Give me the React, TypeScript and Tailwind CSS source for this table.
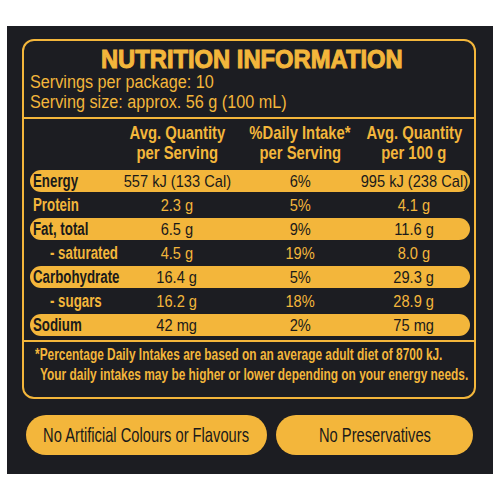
import React from "react";

const rows = [
  { label: "Energy", a: "557 kJ (133 Cal)", b: "6%", c: "995 kJ (238 Cal)", pill: true, sub: false },
  { label: "Protein", a: "2.3 g", b: "5%", c: "4.1 g", pill: false, sub: false },
  { label: "Fat, total", a: "6.5 g", b: "9%", c: "11.6 g", pill: true, sub: false },
  { label: "- saturated", a: "4.5 g", b: "19%", c: "8.0 g", pill: false, sub: true },
  { label: "Carbohydrate", a: "16.4 g", b: "5%", c: "29.3 g", pill: true, sub: false },
  { label: "- sugars", a: "16.2 g", b: "18%", c: "28.9 g", pill: false, sub: true },
  { label: "Sodium", a: "42 mg", b: "2%", c: "75 mg", pill: true, sub: false },
];

function Cell({ children }: { children: React.ReactNode }) {
  return (
    <div className="flex justify-center whitespace-nowrap">
      <span className="inline-block scale-x-[0.86] text-[17px] leading-[22px]">{children}</span>
    </div>
  );
}

export default function App() {
  return (
    <div className="w-[500px] h-[500px] bg-white pt-[26px] px-[7px] font-['Liberation_Sans',Arial,sans-serif]">
      <div className="w-[486px] h-[448px] bg-[#1c1d22] pt-[13px] pl-[15px] flex flex-col overflow-hidden">
        <div className="w-[454px] h-[360px] border-2 border-[#f3b63b] rounded-[12px] flex flex-col text-[#f3b63b]">
          {/* title */}
          <div className="pt-[5px] pb-[5px] border-b-2 border-[#f3b63b]">
            <div className="flex justify-center pl-[6px] whitespace-nowrap">
              <span className="inline-block scale-x-[0.95] text-[25px] leading-[26px] font-bold [-webkit-text-stroke:1px_#f3b63b]">
                NUTRITION INFORMATION
              </span>
            </div>
            <div className="pl-[6px] text-[18px] leading-[20px] whitespace-nowrap">
              <div><span className="inline-block origin-left scale-x-[0.9]">Servings per package: 10</span></div>
              <div><span className="inline-block origin-left scale-x-[0.9]">Serving size: approx. 56 g (100 mL)</span></div>
            </div>
          </div>
          {/* table */}
          <div className="pt-[4px] pb-[4px] pl-[6px] pr-[4px] border-b-2 border-[#f3b63b]">
            <div className="grid grid-cols-[87px_120px_126px_102px] font-bold text-[19px] leading-[20px]">
              <div />
              <div className="flex flex-col items-center whitespace-nowrap">
                <span className="inline-block scale-x-[0.78]">Avg. Quantity</span>
                <span className="inline-block scale-x-[0.78]">per Serving</span>
              </div>
              <div className="flex flex-col items-center whitespace-nowrap">
                <span className="inline-block scale-x-[0.78]">%Daily Intake*</span>
                <span className="inline-block scale-x-[0.78]">per Serving</span>
              </div>
              <div className="flex flex-col items-center whitespace-nowrap">
                <span className="inline-block scale-x-[0.78]">Avg. Quantity</span>
                <span className="inline-block scale-x-[0.78]">per 100 g</span>
              </div>
            </div>
            <div className="mt-[7px] flex flex-col gap-[2px]">
              {rows.map((r) => (
                <div
                  key={r.label}
                  className={
                    r.pill
                      ? "h-[22px] rounded-full bg-[#f3b63b] text-[#1a1a1a] grid grid-cols-[87px_120px_126px_102px] items-center"
                      : "h-[22px] text-[#f3b63b] grid grid-cols-[87px_120px_126px_102px] items-center"
                  }
                >
                  <div className={r.sub ? "pl-[20px] whitespace-nowrap" : "pl-[3px] whitespace-nowrap"}>
                    <span className="inline-block origin-left scale-x-[0.76] font-bold text-[17.5px] leading-[22px]">
                      {r.label}
                    </span>
                  </div>
                  <Cell>{r.a}</Cell>
                  <Cell>{r.b}</Cell>
                  <Cell>{r.c}</Cell>
                </div>
              ))}
            </div>
          </div>
          {/* footnote */}
          <div className="pt-[3px] pl-[11px] text-[17px] leading-[20px] font-bold whitespace-nowrap">
            <div><span className="inline-block origin-left scale-x-[0.7]">*Percentage Daily Intakes are based on an average adult diet of 8700 kJ.</span></div>
            <div className="pl-[5px]"><span className="inline-block origin-left scale-x-[0.7]">Your daily intakes may be higher or lower depending on your energy needs.</span></div>
          </div>
        </div>
        {/* bottom pills */}
        <div className="mt-[16px] ml-[4px] flex gap-[9px] text-[#1a1a1a] text-[21px]">
          <div className="w-[241px] h-[40px] rounded-full bg-[#f3b63b] flex items-center justify-center whitespace-nowrap">
            <span className="inline-block scale-x-[0.7]">No Artificial Colours or Flavours</span>
          </div>
          <div className="w-[197px] h-[40px] rounded-full bg-[#f3b63b] flex items-center justify-center whitespace-nowrap">
            <span className="inline-block scale-x-[0.7]">No Preservatives</span>
          </div>
        </div>
      </div>
    </div>
  );
}
